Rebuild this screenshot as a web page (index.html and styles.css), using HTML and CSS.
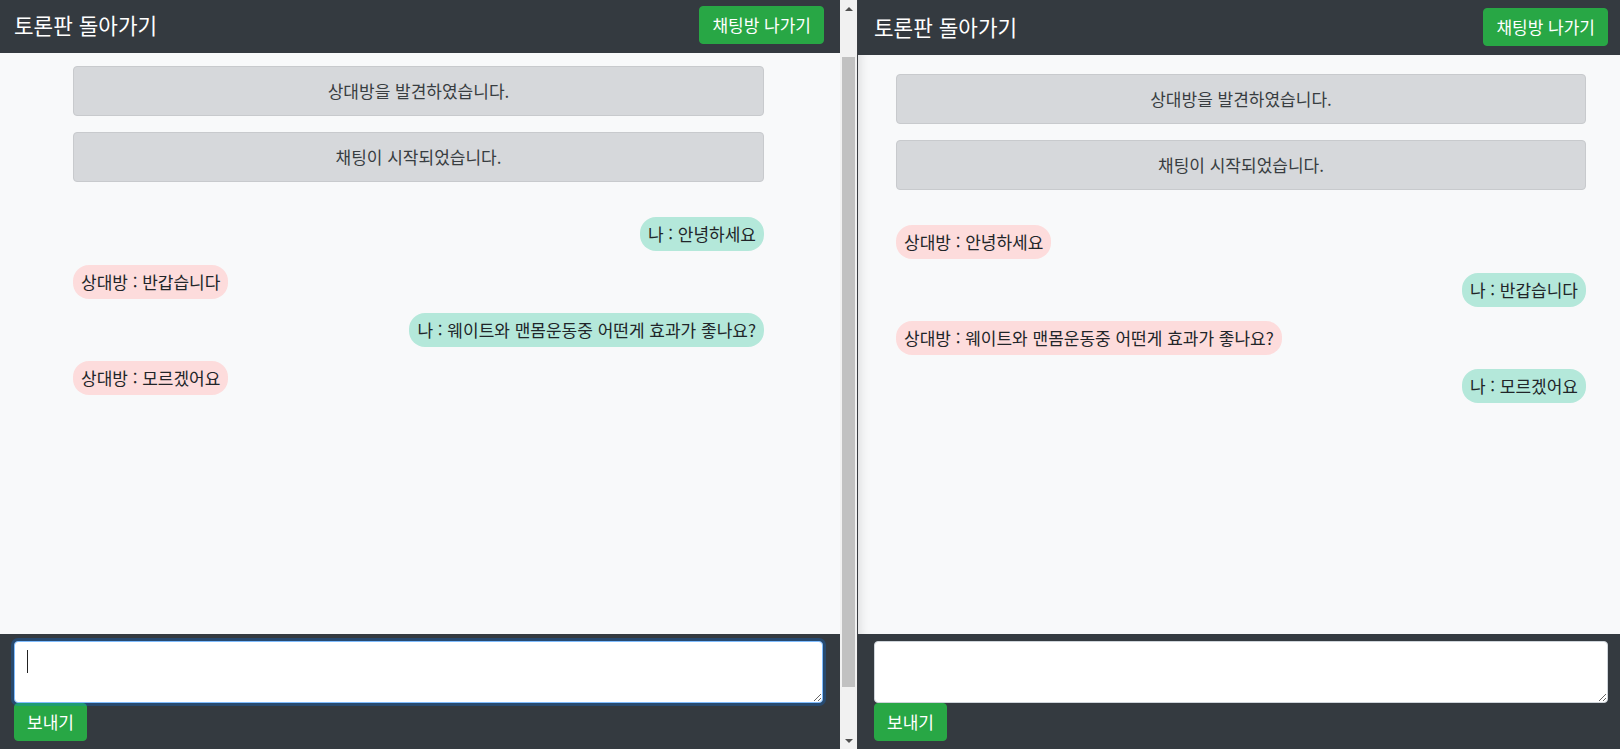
FILE: index.html
```html
<!DOCTYPE html>
<html lang="ko">
<head>
<meta charset="utf-8">
<title>채팅</title>
<link rel="stylesheet" href="styles.css">
</head>
<body>
<div class="screen">
  <section class="window win-left">
    <div class="page">
      <header class="topbar">
        <a class="brand">토론판 돌아가기</a>
        <button class="btn btn-green">채팅방 나가기</button>
      </header>
      <main class="chat">
        <div class="chat-inner">
          <div class="sys">상대방을 발견하였습니다.</div>
          <div class="sys">채팅이 시작되었습니다.</div>
          <div class="msgs">
            <div class="msg me"><span class="bubble">나 : 안녕하세요</span></div>
            <div class="msg other"><span class="bubble">상대방 : 반갑습니다</span></div>
            <div class="msg me"><span class="bubble">나 : 웨이트와 맨몸운동중 어떤게 효과가 좋나요?</span></div>
            <div class="msg other"><span class="bubble">상대방 : 모르겠어요</span></div>
          </div>
        </div>
      </main>
      <footer class="composer">
        <div class="field">
          <textarea class="input focused" rows="2"></textarea>
          <span class="caret"></span>
        </div>
        <button class="btn btn-green send">보내기</button>
      </footer>
    </div>
    <div class="scrollbar">
      <div class="sb-btn"><span class="arrow up"></span></div>
      <div class="sb-track"><div class="thumb"></div></div>
      <div class="sb-btn"><span class="arrow down"></span></div>
    </div>
  </section>
  <div class="divider"></div>
  <section class="window win-right">
    <div class="page">
      <header class="topbar">
        <a class="brand">토론판 돌아가기</a>
        <button class="btn btn-green">채팅방 나가기</button>
      </header>
      <main class="chat">
        <div class="chat-inner">
          <div class="sys">상대방을 발견하였습니다.</div>
          <div class="sys">채팅이 시작되었습니다.</div>
          <div class="msgs">
            <div class="msg other"><span class="bubble">상대방 : 안녕하세요</span></div>
            <div class="msg me"><span class="bubble">나 : 반갑습니다</span></div>
            <div class="msg other"><span class="bubble">상대방 : 웨이트와 맨몸운동중 어떤게 효과가 좋나요?</span></div>
            <div class="msg me"><span class="bubble">나 : 모르겠어요</span></div>
          </div>
        </div>
      </main>
      <footer class="composer">
        <div class="field">
          <textarea class="input" rows="2"></textarea>
        </div>
        <button class="btn btn-green send">보내기</button>
      </footer>
    </div>
  </section>
</div>
</body>
</html>
```

FILE: styles.css
```css
* { box-sizing: border-box; }

html, body {
  margin: 0;
  padding: 0;
  width: 1620px;
  height: 749px;
  overflow: hidden;
  font-family: "Noto Sans CJK KR", "Noto Sans", sans-serif;
  font-size: 17px;
  color: #212529;
}

.screen {
  display: flex;
  width: 1620px;
  height: 749px;
  overflow: hidden;
}

.window {
  display: flex;
  height: 749px;
  flex: none;
}

.win-left { width: 857px; }
.win-right { width: 762px; }

.divider {
  flex: none;
  width: 1px;
  height: 749px;
  background: #3a3d42;
}

.page {
  display: flex;
  flex-direction: column;
  height: 749px;
}

.win-left .page { width: 840px; }
.win-right .page { width: 762px; }

/* header */
.topbar {
  flex: none;
  display: flex;
  justify-content: space-between;
  align-items: flex-start;
  background: #343a40;
}

.win-left .topbar {
  height: 53px;
  padding: 6px 16px 0 14px;
}

.win-right .topbar {
  height: 55px;
  padding: 8px 12px 0 16px;
}

.brand {
  color: #fff;
  font-size: 21.3px;
  line-height: 38px;
  text-decoration: none;
  white-space: nowrap;
}

.btn {
  font-family: inherit;
  font-size: 17px;
  line-height: 24px;
  padding: 6px 12px;
  border: 1px solid transparent;
  border-radius: 4px;
  height: 38px;
  white-space: nowrap;
  cursor: pointer;
}

.btn-green {
  background: #28a745;
  border-color: #28a745;
  color: #fff;
}

/* chat */
.chat {
  flex: 1;
  background: #f8f9fa;
  overflow: hidden;
}

.win-left .chat { padding-top: 13px; }
.win-right .chat {
  padding-top: 19px;
  box-shadow: inset 10px 0 12px -9px rgba(0, 0, 0, 0.14);
}

.win-left .chat-inner { width: 691px; margin-left: 73px; }
.win-right .chat-inner { width: 690px; margin-left: 38px; }

.sys {
  height: 50px;
  margin-bottom: 16px;
  padding: 12px 20px;
  line-height: 24px;
  text-align: center;
  color: #383d41;
  background: #d6d8db;
  border: 1px solid #c8cacd;
  border-radius: 4px;
  white-space: nowrap;
}

.msgs { padding-top: 19px; }

.msg {
  display: flex;
  margin-bottom: 14px;
}

.msg.me { justify-content: flex-end; }
.msg.other { justify-content: flex-start; }

.bubble {
  display: block;
  height: 34px;
  padding: 5px 8px;
  line-height: 24px;
  border-radius: 16px;
  white-space: nowrap;
  color: #212529;
}

.me .bubble { background: #b4e8da; }
.other .bubble { background: #fddcdc; }

/* composer */
.composer {
  flex: none;
  height: 115px;
  background: #343a40;
  padding-top: 7px;
  display: flex;
  flex-direction: column;
  align-items: flex-start;
}

.win-left .composer { padding-left: 14px; }
.win-right .composer { padding-left: 16px; }

.field {
  position: relative;
  height: 62px;
}

.win-left .field { width: 809px; }
.win-right .field { width: 734px; }

.input {
  display: block;
  width: 100%;
  height: 62px;
  margin: 0;
  padding: 6px 12px;
  font-family: inherit;
  font-size: 16px;
  line-height: 24px;
  color: #495057;
  background: #fff;
  border: 1px solid #ced4da;
  border-radius: 4px;
  outline: none;
}

.input.focused {
  border-color: #80bdff;
  box-shadow: 0 0 0 3px rgba(0, 123, 255, 0.25);
}

.caret {
  position: absolute;
  left: 13px;
  top: 9px;
  width: 1px;
  height: 23px;
  background: #222;
}

.send { margin-top: 0; }

/* fake scrollbar of left window */
.scrollbar {
  flex: none;
  width: 17px;
  height: 749px;
  background: #f1f1f1;
  display: flex;
  flex-direction: column;
}

.sb-btn {
  flex: none;
  height: 17px;
  display: flex;
  align-items: center;
  justify-content: center;
}

.sb-track {
  flex: 1;
  padding: 40px 2px 0 2px;
}

.thumb {
  height: 630px;
  background: #c1c1c1;
}

.arrow {
  width: 0;
  height: 0;
  border-left: 4px solid transparent;
  border-right: 4px solid transparent;
}

.arrow.up { border-bottom: 4px solid #505050; }
.arrow.down { border-top: 4px solid #505050; }
```
